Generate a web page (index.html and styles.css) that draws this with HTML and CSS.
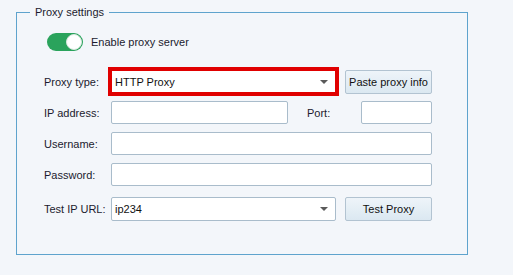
FILE: index.html
```html
<!DOCTYPE html>
<html lang="en">
<head>
    <meta charset="UTF-8">
    <title>Proxy settings</title>
    <link rel="stylesheet" href="styles.css">
</head>
<body>
    <fieldset class="group">
        <legend>Proxy settings</legend>
        <div class="group-body">

            <!-- toggle -->
            <label class="switch-row">
                <span class="switch on"><span class="knob"></span></span>
                <span>Enable proxy server</span>
            </label>

            <div class="row row-first">
                <span class="label">Proxy type:</span>
                <div class="select select-focus">
                    <span>HTTP Proxy</span>
                    <span class="arrow"></span>
                </div>
                <button class="btn">Paste proxy info</button>
            </div>

            <div class="row">
                <span class="label">IP address:</span>
                <input class="field field-ip" type="text">
                <span class="label-port">Port:</span>
                <input class="field field-port" type="text">
            </div>

            <div class="row">
                <span class="label">Username:</span>
                <input class="field field-full" type="text">
            </div>

            <div class="row">
                <span class="label">Password:</span>
                <input class="field field-full" type="password">
            </div>

            <div class="row row-last">
                <span class="label">Test IP URL:</span>
                <div class="select">
                    <span>ip234</span>
                    <span class="arrow"></span>
                </div>
                <button class="btn">Test Proxy</button>
            </div>

        </div>
    </fieldset>
</body>
</html>
```

FILE: styles.css
```css
body {
    margin: 0;
    padding: 5px 0 0 0;
    background: #f3f6fa;
    font-family: "Liberation Sans", Arial, sans-serif;
    font-size: 11px;
    color: #1b1b2e;
}

.group {
    box-sizing: border-box;
    width: 452px;
    margin: 0 0 0 16px;
    padding: 0 0 33px 13px;
    border: 1px solid #5ea3cd;
    min-width: 0;
}

.group legend {
    padding: 0 5px;
    line-height: 14px;
    font-size: 11px;
}

.group-body {
    margin-left: 14px;
    padding-top: 14px;
}

.switch-row {
    display: flex;
    align-items: center;
    margin-left: 3px;
    height: 18px;
}

.switch {
    position: relative;
    width: 36px;
    height: 18px;
    border-radius: 9px;
    background: #2aa35c;
    margin-right: 8px;
}

.switch .knob {
    position: absolute;
    top: 1px;
    right: 1px;
    width: 14px;
    height: 14px;
    border-radius: 50%;
    background: #fff;
    border: 1px solid #d8e8de;
}

.row {
    display: flex;
    align-items: center;
    margin-top: 8px;
    height: 23px;
}

.row-first {
    margin-top: 19px;
}

.row-last {
    margin-top: 11px;
    height: 24px;
}

.label {
    width: 67px;
    flex: none;
}

.label-port {
    width: 54px;
    margin-left: 19px;
    flex: none;
}

.field {
    box-sizing: border-box;
    height: 23px;
    margin: 0;
    padding: 0 4px;
    border: 1px solid #a9bccb;
    border-radius: 2px;
    background: #fff;
    font: inherit;
    outline: none;
}

.field-ip {
    width: 177px;
}

.field-port {
    width: 71px;
}

.field-full {
    width: 321px;
}

.select {
    box-sizing: border-box;
    width: 225px;
    height: 24px;
    display: flex;
    align-items: center;
    justify-content: space-between;
    padding: 0 7px 0 3px;
    border: 1px solid #a9bccb;
    border-radius: 2px;
    background: #fff;
    color: #111;
}

.select-focus {
    height: 23px;
    border-color: #e00000;
    outline: 3px solid #e00000;
    border-radius: 0;
}

.arrow {
    width: 0;
    height: 0;
    border-left: 4px solid transparent;
    border-right: 4px solid transparent;
    border-top: 4px solid #5a5a5a;
}

.btn {
    box-sizing: border-box;
    width: 87px;
    height: 24px;
    margin: 0 0 0 9px;
    padding: 0;
    border: 1px solid #b2c3d1;
    border-radius: 2px;
    background: linear-gradient(#eef4f9, #dbe8f1);
    font-family: inherit;
    font-size: 11px;
    white-space: nowrap;
    color: #111;
}
```
